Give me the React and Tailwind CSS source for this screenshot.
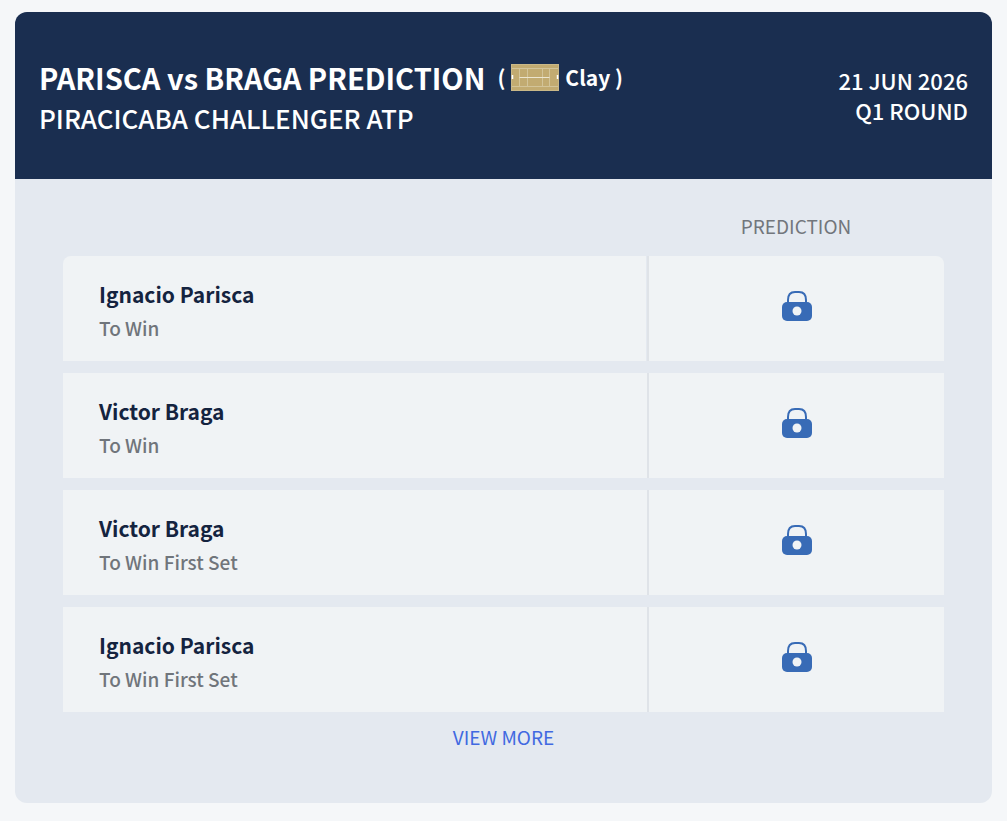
import React from 'react';

const predictions = [
  { id: 1, player: 'Ignacio Parisca', market: 'To Win' },
  { id: 2, player: 'Victor Braga', market: 'To Win' },
  { id: 3, player: 'Victor Braga', market: 'To Win First Set' },
  { id: 4, player: 'Ignacio Parisca', market: 'To Win First Set' },
];

const ClayCourt = () => (
  <svg width="48" height="27" viewBox="0 0 48 27" className="block" aria-hidden="true">
    <rect width="48" height="27" fill="#c2ab71" />
    <rect x="0.5" y="0.5" width="47" height="26" fill="none" stroke="#c9b888" />
    <path
      d="M1 4.5H47M1 22.5H47M8.5 4.5V22.5M16.5 4.5V22.5M31.5 4.5V22.5M38.5 4.5V22.5"
      fill="none"
      stroke="#d3c499"
    />
    <path d="M8.5 13.5H38.5" stroke="#ece5cf" />
    <path d="M1.5 11V15M46.5 11V15" fill="none" stroke="#fff" strokeWidth="1.5" />
  </svg>
);

const LockIcon = () => (
  <svg width="30" height="30" viewBox="0 0 30 30" className="mx-auto block" role="img" aria-label="Locked">
    <path d="M6 13V9Q6 1 13 1H17Q24 1 24 9V13" fill="none" stroke="#386bb6" strokeWidth="2" />
    <rect y="11" width="30" height="19" rx="5" fill="#386bb6" />
    <circle cx="15" cy="20" r="4.5" fill="#f0f3f5" />
  </svg>
);

const App = () => {
  return (
    <div className="min-h-screen bg-[#f5f7f9] px-[15px] pt-3 pb-[18px] font-['Noto_Sans_CJK_SC',sans-serif]">
      <div className="overflow-hidden rounded-xl bg-[#e4e9f0]">
        <header className="flex items-center justify-between bg-[#1a2e50] px-6 pt-11 pb-[41px] text-white">
          <div>
            <h1 className="flex items-center gap-3 text-[29px] leading-[42px] font-bold">
              PARISCA vs BRAGA PREDICTION
              <span className="flex items-center gap-[6px] text-[21px]">
                <span>(</span>
                <ClayCourt />
                <span>Clay )</span>
              </span>
            </h1>
            <h2 className="text-[26px] leading-10 font-medium">PIRACICABA CHALLENGER ATP</h2>
          </div>
          <div className="pb-1 text-right text-[22px] leading-[30px] font-medium">
            <p>21 JUN 2026</p>
            <p>Q1 ROUND</p>
          </div>
        </header>

        <div className="px-12 pt-[31px] pb-12">
          <table className="w-full table-fixed border-collapse">
            <thead>
              <tr>
                <th aria-label="Selection"></th>
                <th className="w-[296px] pb-[14px] text-center text-[19px] leading-8 font-normal text-[#72767c]">
                  PREDICTION
                </th>
              </tr>
            </thead>
            <tbody>
              {predictions.map((item) => (
                <tr key={item.id} className="group border-b-12 border-[#e4e9f0] last:border-b-0">
                  <td className="border-r-2 border-r-[#dfe3e8] bg-[#f0f3f5] bg-clip-padding px-9 pt-[21px] pb-4 group-first:rounded-tl-lg">
                    <p className="text-[21px] leading-[34px] font-bold text-[#14233f]">{item.player}</p>
                    <p className="text-[19px] leading-[34px] font-medium text-[#70757b]">{item.market}</p>
                  </td>
                  <td className="bg-[#f0f3f5] bg-clip-padding pb-[6px] group-first:rounded-tr-lg">
                    <LockIcon />
                  </td>
                </tr>
              ))}
            </tbody>
          </table>
          <a href="#more" className="mt-[7px] block text-center text-[19px] leading-9 text-[#4169e1]">
            VIEW MORE
          </a>
        </div>
      </div>
    </div>
  );
};

export default App;
